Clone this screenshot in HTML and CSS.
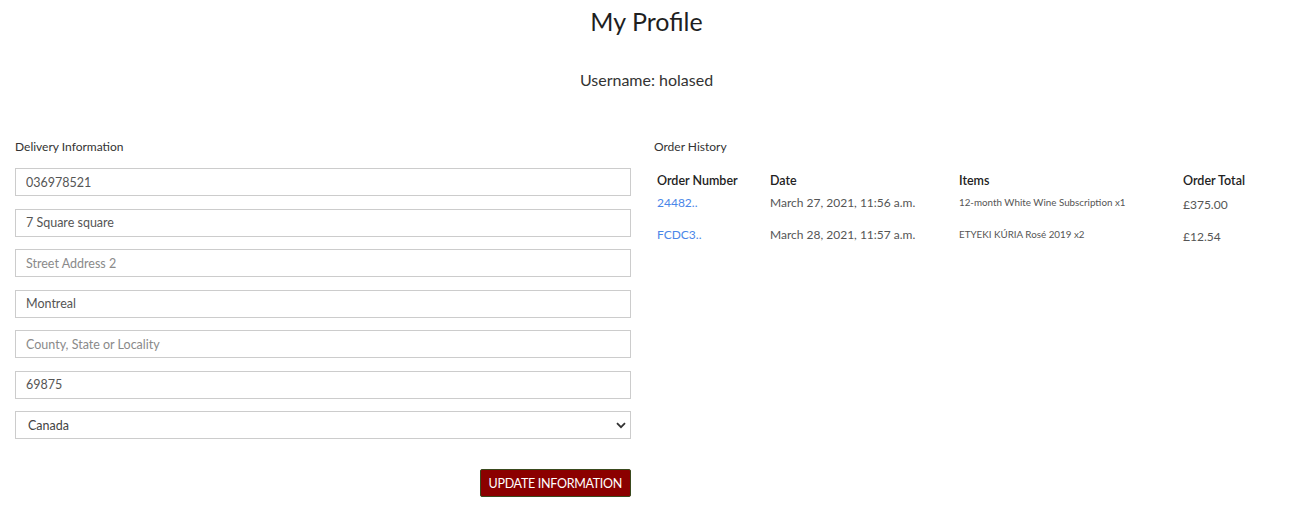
FILE: index.html
```html
<!DOCTYPE html>
<html>
<head>
<meta charset="utf-8">
<link rel="stylesheet" href="styles.css">
</head>
<body>
<header class="page-head">
  <h1 class="title">My Profile</h1>
  <h2 class="username">Username: holased</h2>
</header>
<main class="row">
  <section class="col col-left">
    <p class="section-label">Delivery Information</p>
    <form class="form">
      <input class="field" type="text" value="036978521">
      <input class="field" type="text" value="7 Square square">
      <input class="field" type="text" placeholder="Street Address 2">
      <input class="field" type="text" value="Montreal">
      <input class="field" type="text" placeholder="County, State or Locality">
      <input class="field" type="text" value="69875">
      <div class="select-wrap">
        <select class="field select">
          <option>Canada</option>
        </select>
        <svg class="chev" width="10" height="7" viewBox="0 0 10 7"><path d="M1 1.2 L5 5.2 L9 1.2" fill="none" stroke="#333" stroke-width="1.8"/></svg>
      </div>
      <div class="actions">
        <button type="button" class="btn">UPDATE INFORMATION</button>
      </div>
    </form>
  </section>
  <section class="col col-right">
    <p class="section-label">Order History</p>
    <table class="orders">
      <colgroup>
        <col class="c1"><col class="c2"><col class="c3"><col class="c4">
      </colgroup>
      <thead>
        <tr><th>Order Number</th><th>Date</th><th>Items</th><th>Order Total</th></tr>
      </thead>
      <tbody>
        <tr>
          <td><a href="#" class="link">24482..</a></td>
          <td>March 27, 2021, 11:56 a.m.</td>
          <td class="items">12-month White Wine Subscription x1</td>
          <td class="total">£375.00</td>
        </tr>
        <tr>
          <td><a href="#" class="link">FCDC3..</a></td>
          <td>March 28, 2021, 11:57 a.m.</td>
          <td class="items">ETYEKI KÚRIA Rosé 2019 x2</td>
          <td class="total">£12.54</td>
        </tr>
      </tbody>
    </table>
  </section>
</main>
</body>
</html>
```

FILE: styles.css
```css
* { box-sizing: border-box; }
body {
  margin: 0;
  font-family: "Lato", "Open Sans", sans-serif;
  color: #212529;
  background: #fff;
}
.page-head { text-align: center; }
.title {
  margin: 0;
  padding-top: 6px;
  font-size: 25px;
  font-weight: 400;
  line-height: 30px;
  color: #1f1f1f;
}
.username {
  margin: 34px 0 0;
  font-size: 16px;
  font-weight: 400;
  line-height: 20px;
  color: #333;
}
.row {
  display: flex;
  padding: 49px 15px 0;
  gap: 23px;
}
.col-left { width: 616px; flex: none; }
.col-right { flex: 1; }
.section-label {
  margin: 0;
  font-size: 12px;
  line-height: 16px;
  color: #333;
}
.form {
  display: flex;
  flex-direction: column;
  gap: 12.5px;
  margin-top: 13px;
}
.field {
  display: block;
  width: 100%;
  height: 28px;
  margin: 0;
  padding: 0 10px;
  border: 1px solid #ccc;
  border-radius: 0;
  background: #fff;
  font-family: inherit;
  font-size: 12.5px;
  color: #555;
  outline: none;
}
.field::placeholder { color: #8a8a8a; }
.select-wrap { position: relative; }
.select {
  appearance: none;
  -webkit-appearance: none;
  padding-left: 12px;
  color: #444;
}
.chev {
  position: absolute;
  right: 5px;
  top: 11px;
  pointer-events: none;
}
.actions {
  display: flex;
  justify-content: flex-end;
  margin-top: 17.5px;
}
.btn {
  height: 28px;
  padding: 0 8px;
  background: #8b0000;
  border: 1px solid #3a4a1e;
  border-radius: 2px;
  color: #fff;
  font-family: inherit;
  font-size: 12.5px;
  letter-spacing: -0.3px;
}
.orders {
  margin-top: 15px;
  border-collapse: collapse;
  width: 100%;
  table-layout: fixed;
}
.c1 { width: 113px; }
.c2 { width: 189px; }
.c3 { width: 224px; }
.orders th {
  text-align: left;
  font-weight: 600;
  font-size: 12.5px;
  color: #222;
  padding: 3px 3px 5px;
  line-height: 16px;
}
.orders td {
  font-size: 12px;
  color: #555;
  padding: 1px 3px 13px;
  line-height: 16px;
  vertical-align: top;
}
.orders td.items { font-size: 9.8px; color: #555; padding-top: 0; }
.orders td.total { padding-top: 3px; }
.link { color: #4a86e8; text-decoration: none; }
```
